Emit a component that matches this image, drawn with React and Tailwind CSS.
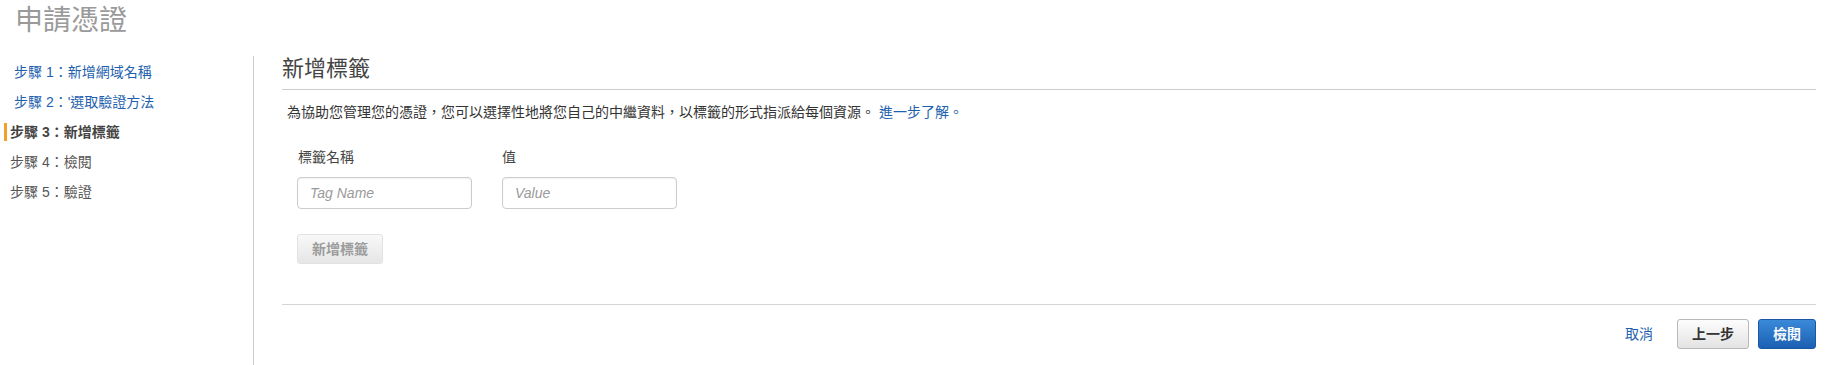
import React from "react";

const steps = [
  { label: "步驟 1：新增網域名稱", state: "done" },
  { label: "步驟 2：'選取驗證方法", state: "done" },
  { label: "步驟 3：新增標籤", state: "current" },
  { label: "步驟 4：檢閱", state: "todo" },
  { label: "步驟 5：驗證", state: "todo" },
];

function StepNav() {
  return (
    <ul className="w-[254px] shrink-0 border-r border-[#cccccc] pt-[1px]">
      {steps.map((s) => {
        if (s.state === "done") {
          return (
            <li key={s.label} className="h-[30px] leading-[30px] pl-[14px] text-[14px] text-[#1e5fae]">
              <a href="#">{s.label}</a>
            </li>
          );
        }
        if (s.state === "current") {
          return (
            <li key={s.label} className="h-[30px] flex items-center pl-[4px]">
              <span className="w-[3px] h-[18px] bg-[#f0a02c] mr-[3px]" />
              <span className="text-[14px] font-bold text-[#444444]">{s.label}</span>
            </li>
          );
        }
        return (
          <li key={s.label} className="h-[30px] leading-[30px] pl-[10px] text-[14px] text-[#555555]">
            {s.label}
          </li>
        );
      })}
    </ul>
  );
}

export default function App() {
  return (
    <div className="h-[365px] w-full bg-white flex flex-col overflow-hidden font-['Liberation_Sans','Noto_Sans_CJK_TC',sans-serif]">
      <h1 className="h-[41px] pt-[1px] leading-[40px] pl-[15px] text-[28px] text-[#9a9a9a]">申請憑證</h1>

      <div className="flex flex-1 mt-[15px]">
        <StepNav />

        {/* main panel */}
        <div className="flex-1 pl-[28px] pr-[14px]">
          <h2 className="text-[22px] leading-[26px] text-[#444444] pb-[7px] border-b border-[#cccccc]">新增標籤</h2>

          <p className="mt-[12px] pl-[5px] text-[14px] leading-[20px] text-[#333333]">
            為協助您管理您的憑證，您可以選擇性地將您自己的中繼資料，以標籤的形式指派給每個資源。{" "}
            <a href="#" className="text-[#1e5fae]">進一步了解。</a>
          </p>

          <div className="pl-[15px]">
            <div className="flex gap-[30px] mt-[25px]">
              <div className="w-[175px]">
                <div className="pl-[1px] text-[14px] leading-[20px] text-[#444444]">標籤名稱</div>
                <input
                  placeholder="Tag Name"
                  className="mt-[10px] w-[175px] h-[32px] px-[12px] text-[14px] border border-[#cccccc] rounded-[4px] shadow-[inset_0_1px_2px_rgba(0,0,0,0.06)] placeholder:italic placeholder:text-[#9a9a9a] outline-none"
                />
              </div>
              <div className="w-[175px]">
                <div className="text-[14px] leading-[20px] text-[#444444]">值</div>
                <input
                  placeholder="Value"
                  className="mt-[10px] w-[175px] h-[32px] px-[12px] text-[14px] border border-[#cccccc] rounded-[4px] shadow-[inset_0_1px_2px_rgba(0,0,0,0.06)] placeholder:italic placeholder:text-[#9a9a9a] outline-none"
                />
              </div>
            </div>

            <button
              disabled
              className="mt-[25px] w-[86px] h-[30px] rounded-[3px] border border-[#e2e2e2] bg-linear-to-b from-[#f8f8f8] to-[#e6e6e6] text-[14px] font-bold text-[#9c9c9c]"
            >
              新增標籤
            </button>
          </div>

          {/* footer actions */}
          <div className="mt-[40px] border-t border-[#d5d5d5] pt-[14px] flex items-center justify-end">
            <a href="#" className="text-[14px] text-[#1e5fae] mr-[24px]">取消</a>
            <button className="w-[72px] h-[30px] rounded-[3px] border border-[#b8b8b8] bg-linear-to-b from-[#fdfdfd] to-[#e3e3e3] text-[14px] font-bold text-[#333333] mr-[9px]">
              上一步
            </button>
            <button className="w-[58px] h-[30px] rounded-[3px] border border-[#1a58a6] bg-linear-to-b from-[#3a8ad9] to-[#1c5fb3] text-[14px] font-bold text-white">
              檢閱
            </button>
          </div>
        </div>
      </div>
    </div>
  );
}
